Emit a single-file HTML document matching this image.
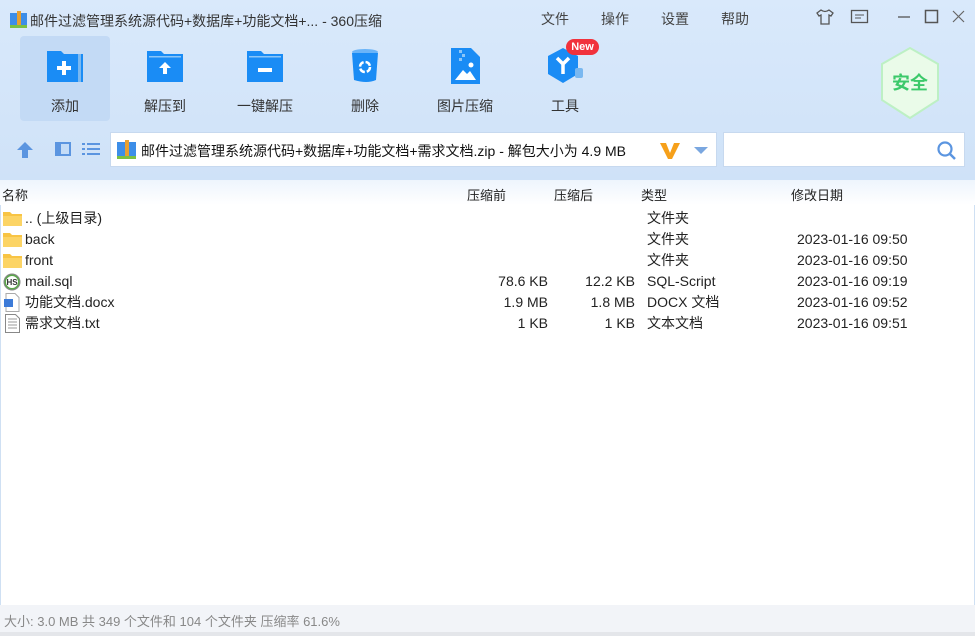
<!DOCTYPE html>
<html><head><meta charset="utf-8"><style>
*{margin:0;padding:0;box-sizing:border-box}
body{width:975px;height:636px;overflow:hidden;font-family:"Liberation Sans","Noto Sans CJK SC",sans-serif;background:#fff;position:relative;color:#222}
.top{position:absolute;left:0;top:0;width:975px;height:180px;background:linear-gradient(#d9e9fb,#cfe2f8);}
.title{position:absolute;left:30px;top:11px;font-size:14px;color:#333}
.menu{position:absolute;top:9px;font-size:14px;color:#444}
.tb{position:absolute;top:36px;width:90px;height:85px;text-align:center;font-size:14px;color:#333}
.tb .lb{position:absolute;top:60px;left:0;width:100%}
.tb svg{position:absolute;left:27px;top:12px}
.addr{position:absolute;left:110px;top:132px;width:607px;height:35px;background:#fff;border:1px solid #c7d9ef}
.search{position:absolute;left:723px;top:132px;width:242px;height:35px;background:#fff;border:1px solid #c7d9ef}
.hdr{position:absolute;left:0;top:180px;width:975px;height:25px;background:linear-gradient(#eef5fd,#fff);font-size:13px}
.hdr span{position:absolute;top:5px}
.row{position:absolute;left:0;width:975px;height:21px;font-size:14px;line-height:18px}
.row span{position:absolute;top:1px;line-height:18px;height:18px;white-space:nowrap}
.status{position:absolute;left:0;top:605px;width:975px;height:27px;background:#f2f4f8;font-size:13px;color:#888;padding:6px 0 0 4px}
</style></head><body>
<div class="top"></div>
<svg style="position:absolute;left:10px;top:11px" width="18" height="18"><rect x="0" y="2" width="17" height="15" fill="#3d8ee8"/><rect x="7" y="0" width="4" height="17" fill="#e8a030"/><rect x="0" y="14" width="17" height="3" fill="#7bc043"/></svg>
<div class="title">邮件过滤管理系统源代码+数据库+功能文档+... - 360压缩</div>
<div class="menu" style="left:541px">文件</div><div class="menu" style="left:601px">操作</div><div class="menu" style="left:661px">设置</div><div class="menu" style="left:721px">帮助</div>
<svg style="position:absolute;left:815px;top:8px" width="20" height="18"><path d="M6 2 L2 5 L4 8 L6 7 L6 16 L14 16 L14 7 L16 8 L18 5 L14 2 Q10 5 6 2Z" fill="none" stroke="#555" stroke-width="1.3"/></svg>
<svg style="position:absolute;left:850px;top:9px" width="20" height="18"><rect x="1.5" y="1.5" width="16" height="12" fill="none" stroke="#555" stroke-width="1.3"/><path d="M5 6h9M5 9h6" stroke="#555"/></svg>
<svg style="position:absolute;left:895px;top:9px" width="75" height="16"><path d="M3 8h12" stroke="#555" stroke-width="1.3"/><rect x="30.5" y="1.5" width="12" height="12" fill="none" stroke="#555" stroke-width="1.5"/><path d="M58 2l11 11M69 2l-11 11" stroke="#666" stroke-width="1.2"/></svg>
<div class="tb" style="left:20px;background:#c3daf5;border-radius:4px"><svg width="36" height="34"><path d="M0 3h14l3 3h19v28H0z" fill="#1a8cf5"/><rect x="31" y="6" width="3" height="28" fill="#7ab8f0"/><path d="M15 13h4v5h5v4h-5v5h-4v-5h-5v-4h5z" fill="#fff"/></svg><div class="lb">添加</div></div>
<div class="tb" style="left:120px"><svg width="36" height="34"><path d="M0 3h14l3 3h19v28H0z" fill="#1a8cf5"/><rect x="2" y="8" width="32" height="1.5" fill="#8cc6f8"/><path d="M18 14l6 6h-4v6h-4v-6h-4z" fill="#fff"/></svg><div class="lb">解压到</div></div>
<div class="tb" style="left:220px"><svg width="36" height="34"><path d="M0 3h14l3 3h19v28H0z" fill="#1a8cf5"/><rect x="2" y="8" width="32" height="1.5" fill="#8cc6f8"/><rect x="11" y="20" width="14" height="4" fill="#fff"/></svg><div class="lb">一键解压</div></div>
<div class="tb" style="left:320px"><svg width="36" height="36"><ellipse cx="18" cy="4" rx="13" ry="3" fill="#6ab4f8"/><path d="M5 5h26l-2 27q-9 4-22 0z" fill="#1a8cf5"/><circle cx="18" cy="19" r="5" fill="none" stroke="#fff" stroke-width="2.5" stroke-dasharray="6 2"/></svg><div class="lb">删除</div></div>
<div class="tb" style="left:420px"><svg width="36" height="36"><path d="M4 0h20l9 9v27H4z" fill="#1a8cf5"/><path d="M8 32l8-10 4 4 3-3 6 9z" fill="#fff"/><circle cx="24" cy="17" r="2.5" fill="#fff"/><path d="M12 2h3v3h-3zM15 6h3v3h-3zM12 10h3v3h-3z" fill="#8cc6f8"/></svg><div class="lb">图片压缩</div></div>
<div class="tb" style="left:520px"><svg width="40" height="36"><path d="M16 0l15 8v18l-15 9-15-9V8z" fill="#1a8cf5"/><rect x="28" y="20" width="8" height="10" rx="2" fill="#7ab8f0"/><path d="M10 10l6 6 6-6M16 16v10" stroke="#fff" stroke-width="3.5" fill="none"/></svg><div class="lb">工具</div></div>
<div style="position:absolute;left:566px;top:39px;width:33px;height:16px;background:#f1323c;border-radius:8px;color:#fff;font-size:11px;font-weight:bold;text-align:center;line-height:16px">New</div>
<svg style="position:absolute;left:879px;top:46px" width="62" height="74"><path d="M31 2l28 16v36L31 72 3 54V18z" fill="#eafbe9" stroke="#bdf0c4" stroke-width="2"/><text x="31" y="43" text-anchor="middle" font-size="18" font-weight="bold" fill="#3cc96a" font-family="Noto Sans CJK SC,sans-serif">安全</text></svg>
<svg style="position:absolute;left:14px;top:140px" width="90" height="20"><path d="M11 2l8 8h-5v8h-6v-8H3z" fill="#5b95e0"/><rect x="41" y="2" width="16" height="14" fill="#5b95e0"/><rect x="43" y="4" width="12" height="10" fill="#c4dcf7"/><rect x="43" y="4" width="4" height="10" fill="#5b95e0"/><path d="M68 4h3M73 4h13M68 9h3M73 9h13M68 14h3M73 14h13" stroke="#5b95e0" stroke-width="2"/></svg>
<div class="addr"><svg style="position:absolute;left:6px;top:7px" width="20" height="20"><rect x="0" y="2" width="19" height="17" fill="#3d8ee8"/><rect x="8" y="0" width="4" height="19" fill="#e8a030"/><rect x="0" y="16" width="19" height="3" fill="#7bc043"/></svg><span style="position:absolute;left:30px;top:8px;font-size:14px;color:#111">邮件过滤管理系统源代码+数据库+功能文档+需求文档.zip - 解包大小为 4.9 MB</span><svg style="position:absolute;left:548px;top:8px" width="60" height="20"><path d="M1 2h6l4 10 4-10h6l-8 16h-4z" fill="#f6a01a"/><path d="M35 6h14l-7 7z" fill="#7aa7e0"/></svg></div>
<div class="search"><svg style="position:absolute;left:212px;top:7px" width="22" height="22"><circle cx="9" cy="9" r="6.5" fill="none" stroke="#5b95e0" stroke-width="2.2"/><path d="M14 14l5 5" stroke="#5b95e0" stroke-width="2.5"/></svg></div>
<div class="hdr"><span style="left:2px">名称</span><span style="left:467px">压缩前</span><span style="left:554px">压缩后</span><span style="left:641px">类型</span><span style="left:791px">修改日期</span></div>
<div class="row" style="top:208px"><svg style="position:absolute;left:3px;top:3px" width="20" height="16"><path d="M0 1h7l2 2h10v12H0z" fill="#f8c444"/><rect x="0" y="5" width="19" height="10" fill="#fcd465"/></svg><span style="left:25px">.. (上级目录)</span><span style="left:647px">文件夹</span></div>
<div class="row" style="top:229px"><svg style="position:absolute;left:3px;top:3px" width="20" height="16"><path d="M0 1h7l2 2h10v12H0z" fill="#f8c444"/><rect x="0" y="5" width="19" height="10" fill="#fcd465"/></svg><span style="left:25px">back</span><span style="left:647px">文件夹</span><span style="left:797px">2023-01-16 09:50</span></div>
<div class="row" style="top:250px"><svg style="position:absolute;left:3px;top:3px" width="20" height="16"><path d="M0 1h7l2 2h10v12H0z" fill="#f8c444"/><rect x="0" y="5" width="19" height="10" fill="#fcd465"/></svg><span style="left:25px">front</span><span style="left:647px">文件夹</span><span style="left:797px">2023-01-16 09:50</span></div>
<div class="row" style="top:271px"><svg style="position:absolute;left:3px;top:2px" width="20" height="18"><circle cx="9" cy="9" r="8" fill="#5aa84a" stroke="#888"/><circle cx="9" cy="9" r="6" fill="#fff"/><text x="9" y="12" text-anchor="middle" font-size="8" font-weight="bold" fill="#333">HS</text></svg><span style="left:25px">mail.sql</span><span style="right:427px">78.6 KB</span><span style="right:340px">12.2 KB</span><span style="left:647px">SQL-Script</span><span style="left:797px">2023-01-16 09:19</span></div>
<div class="row" style="top:292px"><svg style="position:absolute;left:4px;top:1px" width="16" height="19"><path d="M2 .5h9l4 4v14H2z" fill="#fff" stroke="#aaa"/><rect x="0" y="6" width="9" height="8" fill="#3d7bd8"/></svg><span style="left:25px">功能文档.docx</span><span style="right:427px">1.9 MB</span><span style="right:340px">1.8 MB</span><span style="left:647px">DOCX 文档</span><span style="left:797px">2023-01-16 09:52</span></div>
<div class="row" style="top:313px"><svg style="position:absolute;left:5px;top:1px" width="16" height="19"><path d="M.5 .5h10l4 4v14H.5z" fill="#fff" stroke="#888"/><path d="M3 5h9M3 8h9M3 11h9M3 14h9" stroke="#999"/></svg><span style="left:25px">需求文档.txt</span><span style="right:427px">1 KB</span><span style="right:340px">1 KB</span><span style="left:647px">文本文档</span><span style="left:797px">2023-01-16 09:51</span></div>
<div style="position:absolute;left:0;top:205px;width:1px;height:400px;background:#cfe0f3"></div>
<div style="position:absolute;right:0;top:205px;width:1px;height:400px;background:#cfe0f3"></div>
<div class="status">大小: 3.0 MB 共 349 个文件和 104 个文件夹 压缩率 61.6%</div>
<div style="position:absolute;left:0;top:632px;width:975px;height:4px;background:#e4e6ea"></div>
</body></html>
